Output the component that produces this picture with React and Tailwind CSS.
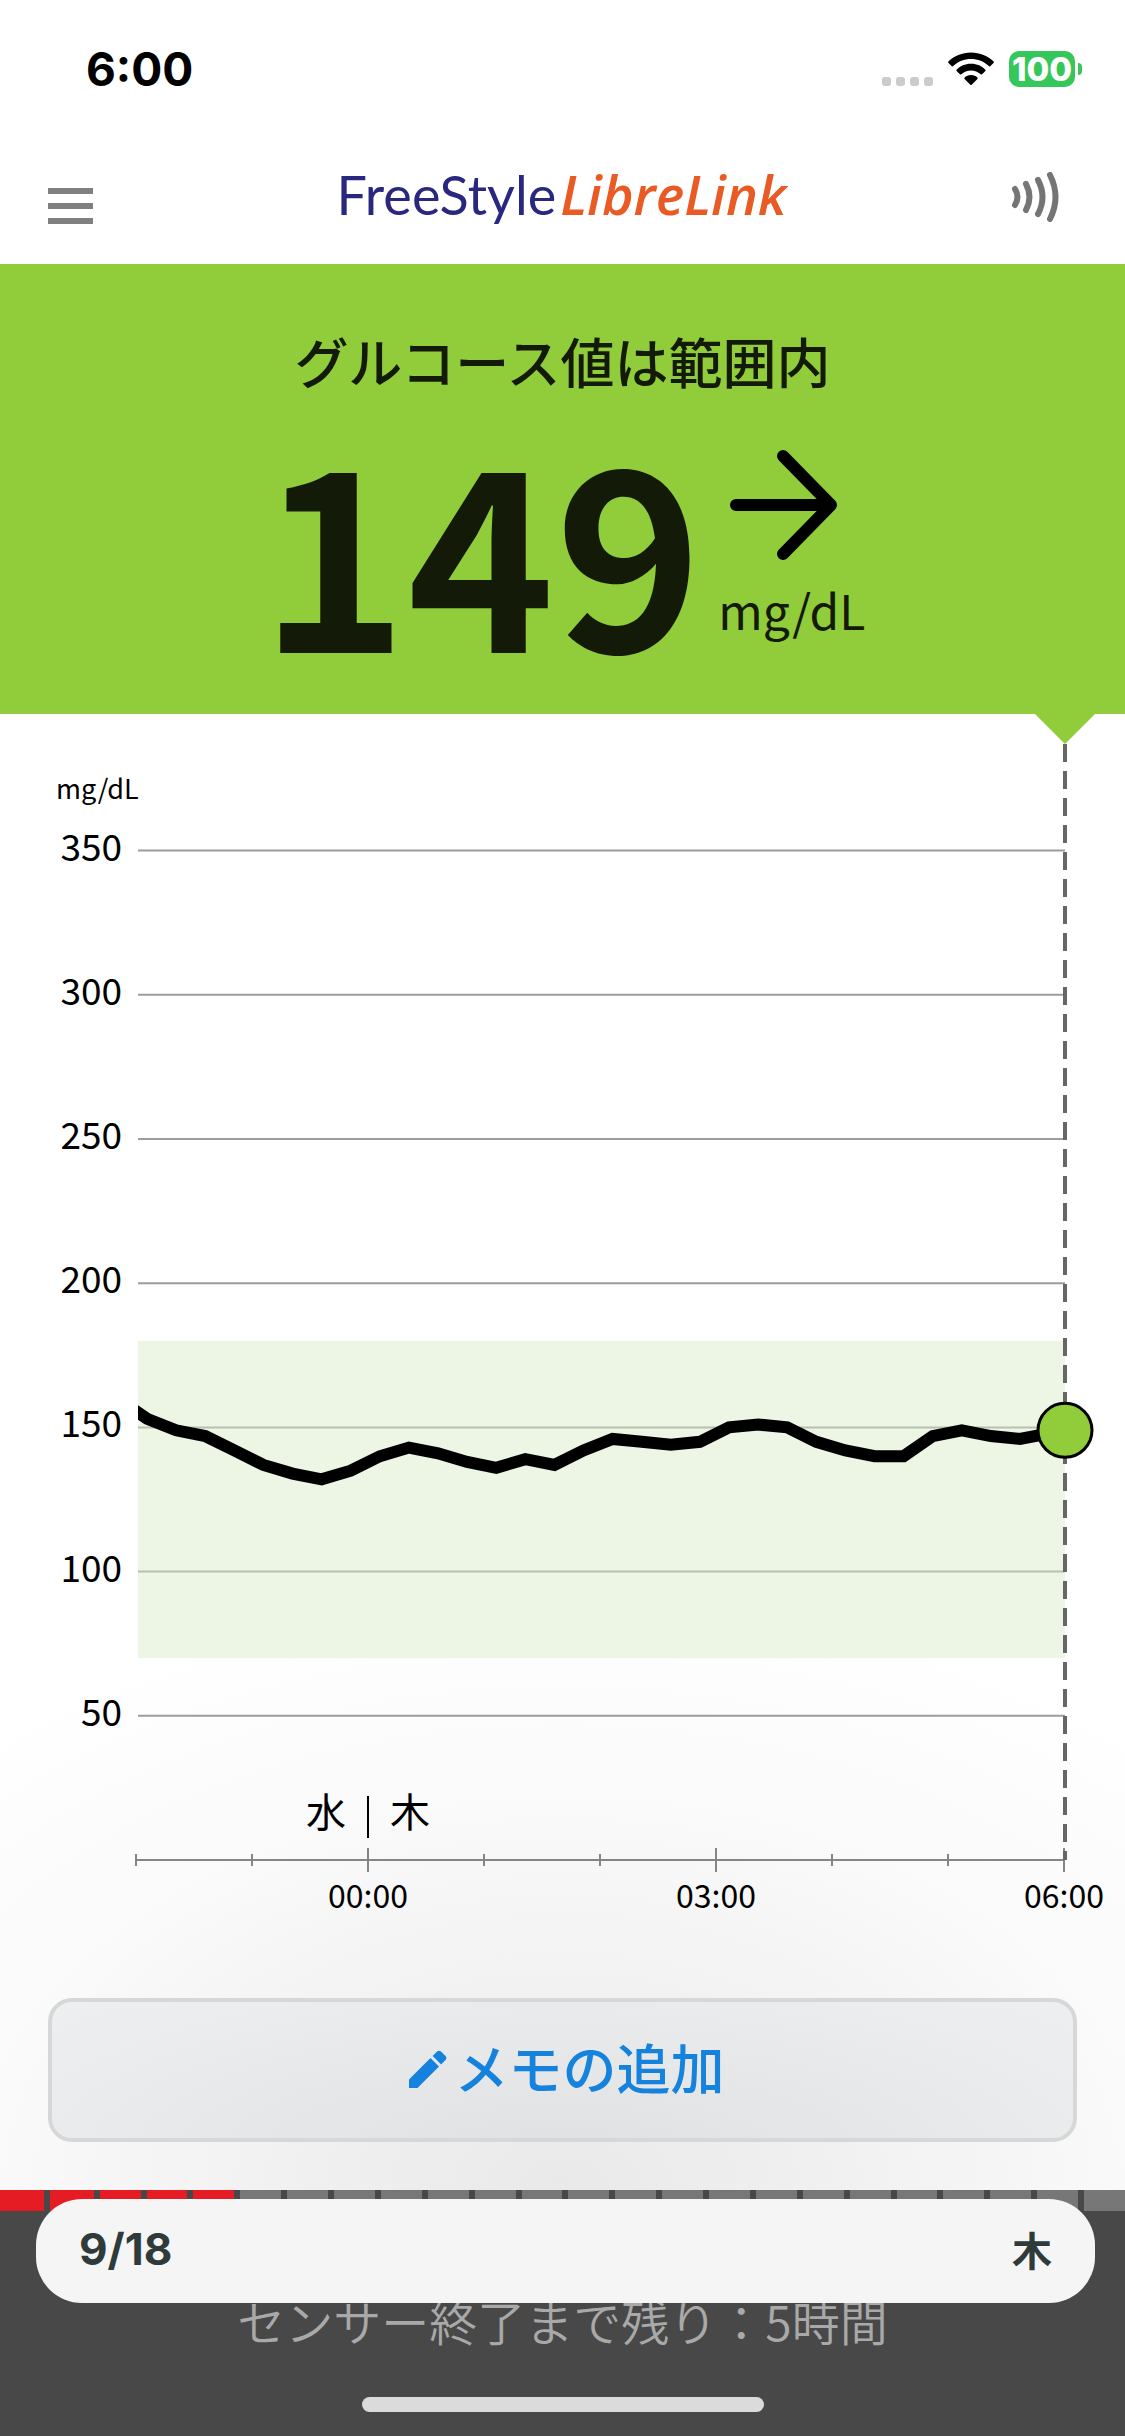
import { useState } from "react";

// Readings every 15 minutes, the oldest first (mg/dL)
const READINGS = [
  153, 149, 147, 142, 137, 134, 132, 135, 140, 143, 141, 138, 136, 139, 137,
  142, 146, 145, 144, 145, 150, 151, 150, 145, 142, 140, 140, 147, 149, 147,
  146,
];
const CURRENT = 149;

const LEFT = 138;
const RIGHT = 1065;
const AXIS_Y = 1146;
const PER_HOUR = 116;

const yFor = (value) => AXIS_Y - (value * 721) / 250;

const TOTAL_SEGMENTS = 24;
const USED_SEGMENTS = 5;

const StatusBar = () => (
  <div className="flex h-[138px] items-center justify-between pl-[86px] pr-[43px]">
    <span className="font-['Inter',sans-serif] text-[46px] font-bold leading-none text-black">
      6:00
    </span>
    <div className="flex items-center gap-[15px]">
      <div className="flex gap-[5px] self-end pb-px">
        {[0, 1, 2, 3].map((dot) => (
          <span key={dot} className="h-[9px] w-[9px] rounded-[3px] bg-[#cbcbcb]" />
        ))}
      </div>
      <svg width="46" height="34" viewBox="0 0 46 34" fill="black">
        <path d="M23 0.5C32 0.5 40 4 45.6 9.6Q46.2 10.4 45.5 11.1L42.2 14.2Q41.5 14.8 40.8 14.1C36 9.6 29.800 7 23 7S10 9.600 5.200 14.100Q4.500 14.800 3.800 14.200L0.500 11.100Q-0.200 10.400 0.400 9.600C6 4 14 0.500 23 0.500Z" />
        <path d="M23 11.800C29 11.800 34 14.100 37.400 17.800Q38 18.500 37.400 19.100L34.100 22.300Q33.400 22.900 32.700 22.300C30 19.800 26.800 18.400 23 18.400S16 19.800 13.300 22.300Q12.600 22.900 11.900 22.300L8.600 19.100Q8 18.500 8.600 17.800C12 14.100 17 11.800 23 11.800Z" />
        <path d="M23 23C25.700 23 28 24 29.500 25.800Q30 26.500 29.400 27.100L23.700 32.700Q23 33.300 22.300 32.700L16.600 27.100Q16 26.500 16.500 25.800C18 24 20.300 23 23 23Z" />
      </svg>
      <div className="flex items-center gap-[3px]">
        <span className="flex h-9 w-[66px] items-center justify-center rounded-[10px] bg-[#35c759] font-['Inter',sans-serif] text-[33px] font-extrabold leading-none text-white">
          100
        </span>
        <span className="h-3 w-1 rounded-r-full bg-[#35c759]" />
      </div>
    </div>
  </div>
);

const NavBar = () => (
  <div className="grid h-[126px] grid-cols-[1fr_auto_1fr] items-center pl-12 pr-[66px]">
    <button
      type="button"
      aria-label="メニュー"
      className="flex w-[45px] flex-col gap-[9px] pt-2.5"
    >
      <span className="h-1.5 w-full bg-[#808080]" />
      <span className="h-1.5 w-full bg-[#808080]" />
      <span className="h-1.5 w-full bg-[#808080]" />
    </button>

    <h1 className="flex items-baseline gap-1 pb-3.5 pl-4 leading-none">
      <span className="font-['Lato',sans-serif] text-[54px] text-[#29277f]">
        FreeStyle
      </span>
      <span className="font-['Open_Sans',sans-serif] text-[54px] font-semibold italic text-[#e95a24]">
        LibreLink
      </span>
    </h1>

    <button type="button" aria-label="スキャン" className="justify-self-end pb-2">
      <svg
        width="48"
        height="50"
        viewBox="0 0 48 50"
        fill="none"
        stroke="#757575"
        strokeWidth="6"
        strokeLinecap="round"
      >
        <path d="M4 17Q9 25 4 33" />
        <path d="M15 12Q22 25 15 38" />
        <path d="M27 8Q36 25 27 42" />
        <path d="M39 3Q50 25 39 47" />
      </svg>
    </button>
  </div>
);

const GlucoseBanner = () => (
  <section className="flex h-[450px] flex-col items-center bg-[#91cc3b] pt-[61px] text-[#141a08]">
    <h2 className="text-[54px] font-medium leading-[72px]">
      グルコース値は範囲内
    </h2>
    <div className="flex items-end gap-4 pt-[22px]">
      <span className="text-[250px] font-bold leading-[250px]">{CURRENT}</span>
      <div className="flex flex-col items-start gap-3 pb-6">
        <svg
          className="ml-3"
          width="108"
          height="112"
          viewBox="0 0 108 112"
          fill="none"
          stroke="black"
          strokeWidth="12"
          strokeLinecap="round"
          strokeLinejoin="round"
        >
          <path d="M6 56H101M53 7L101 56L53 105" />
        </svg>
        <span className="text-[48px] leading-[72px]">mg/dL</span>
      </div>
    </div>
  </section>
);

const GlucoseChart = () => {
  // Starts a little left of the plot, the clip path cuts it off at the edge
  const line = [
    `118,${yFor(160)}`,
    ...READINGS.map((value, i) => `${147 + i * 29.1},${yFor(value)}`),
    `${RIGHT},${yFor(CURRENT)}`,
  ].join(" ");

  return (
    <svg viewBox="0 0 1125 1230" className="block h-auto w-full">
      <clipPath id="plot">
        <rect x={LEFT} y="0" width={RIGHT - LEFT} height={AXIS_Y} />
      </clipPath>

      {/* Target range 70 - 180 */}
      <rect
        x={LEFT}
        y={yFor(180)}
        width={RIGHT - LEFT}
        height={yFor(70) - yFor(180)}
        fill="#edf5e4"
      />

      <text x="56" y="85" fontSize="27">
        mg/dL
      </text>

      {/* Horizontal grid */}
      {[350, 300, 250, 200, 150, 100, 50].map((value) => (
        <g key={value}>
          <line
            x1={LEFT}
            x2={RIGHT}
            y1={yFor(value)}
            y2={yFor(value)}
            stroke={value === 150 || value === 100 ? "#b7c1b0" : "#9c9c9c"}
            strokeWidth="2"
          />
          <text x="122" y={yFor(value) + 10} fontSize="37" textAnchor="end">
            {value}
          </text>
        </g>
      ))}

      {/* Time axis, one tick an hour */}
      <line x1="136" x2={RIGHT} y1={AXIS_Y} y2={AXIS_Y} stroke="#858585" strokeWidth="2" />
      {[0, 1, 2, 3, 4, 5, 6, 7, 8].map((hour) => {
        const size = hour % 3 === 2 ? 12 : 6;
        const x = 136 + hour * PER_HOUR;
        return (
          <line
            key={hour}
            x1={x}
            x2={x}
            y1={AXIS_Y - size}
            y2={AXIS_Y + size}
            stroke="#858585"
            strokeWidth="2"
          />
        );
      })}
      {["00:00", "03:00", "06:00"].map((time, i) => (
        <text
          key={time}
          x={368 + i * 3 * PER_HOUR}
          y="1194"
          fontSize="32"
          textAnchor="middle"
        >
          {time}
        </text>
      ))}

      {/* Day change at midnight */}
      <text x="326" y="1113" fontSize="40" textAnchor="middle">
        水
      </text>
      <line x1="368" x2="368" y1="1082" y2="1124" stroke="black" strokeWidth="2" />
      <text x="410" y="1113" fontSize="40" textAnchor="middle">
        木
      </text>

      {/* Current reading marker */}
      <line
        x1={RIGHT}
        x2={RIGHT}
        y1="30"
        y2={AXIS_Y}
        stroke="#666666"
        strokeWidth="4"
        strokeDasharray="18 9"
      />
      <path d="M1035 0H1095L1065 30Z" fill="#91cc3b" />
      <polyline
        points={line}
        fill="none"
        stroke="black"
        strokeWidth="12"
        clipPath="url(#plot)"
      />
      <circle cx={RIGHT} cy={yFor(CURRENT)} r="27" fill="#91cc3b" stroke="black" strokeWidth="3" />
    </svg>
  );
};

const SensorFooter = () => (
  <footer className="flex grow flex-col bg-[#484848]">
    <div className="flex h-[21px] gap-1.5">
      {Array.from({ length: TOTAL_SEGMENTS }, (_, i) => (
        <span
          key={i}
          className={`${i < 2 ? "grow-[44]" : "grow-[41]"} basis-0 ${i < USED_SEGMENTS ? "bg-[#e51c23]" : "bg-[#777777]"}`}
        />
      ))}
    </div>
    <p className="pt-[73px] text-center text-[48px] font-[350] leading-[72px] text-[#a9a9a9]">
      センサー終了まで残り：5時間
    </p>
    <div className="mx-auto mb-6 mt-auto h-[15px] w-[402px] rounded-full bg-[#dbdbdb]" />
  </footer>
);

const App = () => {
  const [noteOpen, setNoteOpen] = useState(false);

  return (
    <div className="relative flex min-h-screen flex-col bg-white font-['Noto_Sans_CJK_JP',sans-serif]">
      <header className="bg-white">
        <StatusBar />
        <NavBar />
      </header>
      <GlucoseBanner />

      <main className="bg-[radial-gradient(ellipse_900px_600px_at_50%_100%,#e9e9e9_0%,#f1f1f1_32%,#fafafa_65%,#ffffff_100%)]">
        <GlucoseChart />
        <div className="px-12 pb-12 pt-[54px]">
          <button
            type="button"
            aria-pressed={noteOpen}
            onClick={() => setNoteOpen(!noteOpen)}
            className="flex h-36 w-full items-center justify-center gap-2 rounded-3xl border-4 border-[#d6d8d8] bg-[radial-gradient(ellipse_at_50%_120%,#dfe0e2_0%,#e6e8ea_50%,#edeff1_100%)] pb-2 pl-2 text-[54px] font-medium text-[#1583dd]"
          >
            <svg
              className="mt-1.5"
              width="38"
              height="38"
              viewBox="0 0 38 38"
              fill="currentColor"
            >
              <path d="M0 29.500L21.500 8L30 16.500L8.500 38H0Z" />
              <path d="M23.600 5.900L28 1.500Q30 -0.200 32 1.500L36.500 6Q38.200 8 36.500 10L32.100 14.400Z" />
            </svg>
            メモの追加
          </button>
        </div>
      </main>

      <SensorFooter />

      {/* Date banner floating over the footer */}
      <div className="absolute inset-x-0 bottom-[133px] ml-9 mr-[30px] flex h-[104px] items-center justify-between rounded-[46px] bg-[#f5f5f5] px-[43px] pb-1 font-bold text-[#2f3a3a]">
        <span className="font-['Inter',sans-serif] text-[44px]">9/18</span>
        <span className="text-[40px]">木</span>
      </div>
    </div>
  );
};

export default App;
